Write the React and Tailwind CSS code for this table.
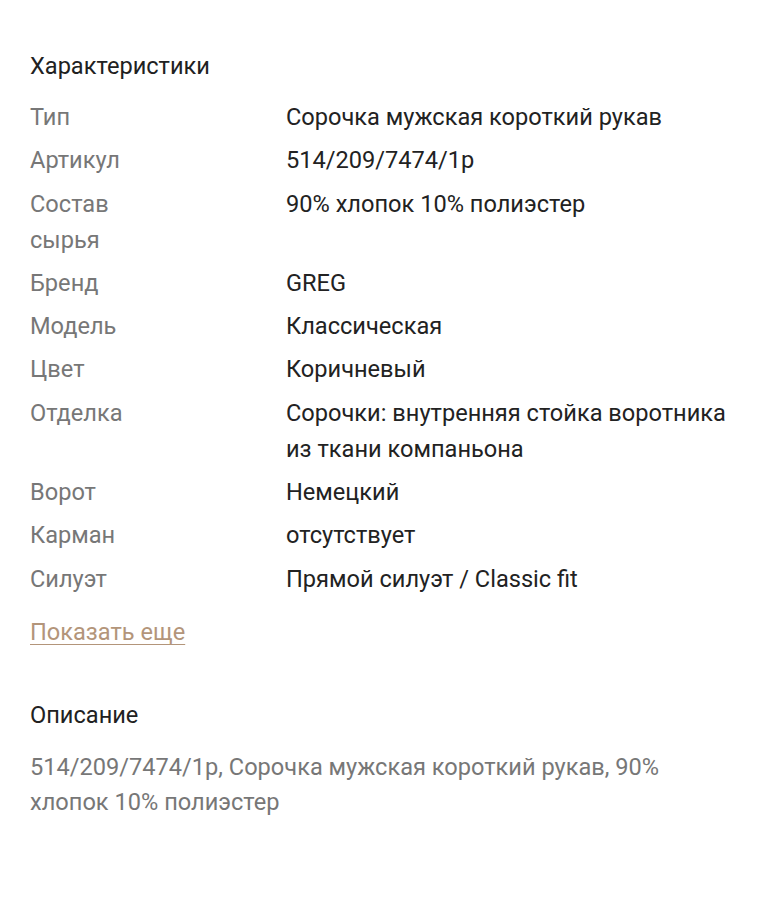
export default function App() {
  const rows = [
    ["Тип", "Сорочка мужская короткий рукав"],
    ["Артикул", "514/209/7474/1р"],
    ["Состав сырья", "90% хлопок 10% полиэстер"],
    ["Бренд", "GREG"],
    ["Модель", "Классическая"],
    ["Цвет", "Коричневый"],
    ["Отделка", "Сорочки: внутренняя стойка воротника из ткани компаньона"],
    ["Ворот", "Немецкий"],
    ["Карман", "отсутствует"],
    ["Силуэт", "Прямой силуэт / Classic fit"],
  ];
  return (
    <div className="w-[758px] min-h-[900px] bg-white font-['Roboto',sans-serif] text-[23.6px] pl-[30px] pr-[22px] pt-[48px]">
      <div className="leading-[36px] text-[#212121]">Характеристики</div>
      <div className="mt-[15px] grid grid-cols-[256px_1fr] gap-y-[7.3px] leading-[36px]">
        {rows.map(([k, v]) => (
          <div key={k} className="contents">
            <div className="text-[#777777] pr-[120px]">{k}</div>
            <div className="text-[#222222]">{v}</div>
          </div>
        ))}
      </div>
      <div className="mt-[17px] leading-[36px]">
        <a className="text-[#b3957a] underline underline-offset-[4px] decoration-[1px] cursor-pointer">Показать еще</a>
      </div>
      <div className="mt-[47px] leading-[36px] text-[#212121]">Описание</div>
      <div className="mt-[17px] leading-[35px] text-[#777777] pr-[8px]">
        514/209/7474/1р, Сорочка мужская короткий рукав, 90% хлопок 10% полиэстер
      </div>
    </div>
  );
}
